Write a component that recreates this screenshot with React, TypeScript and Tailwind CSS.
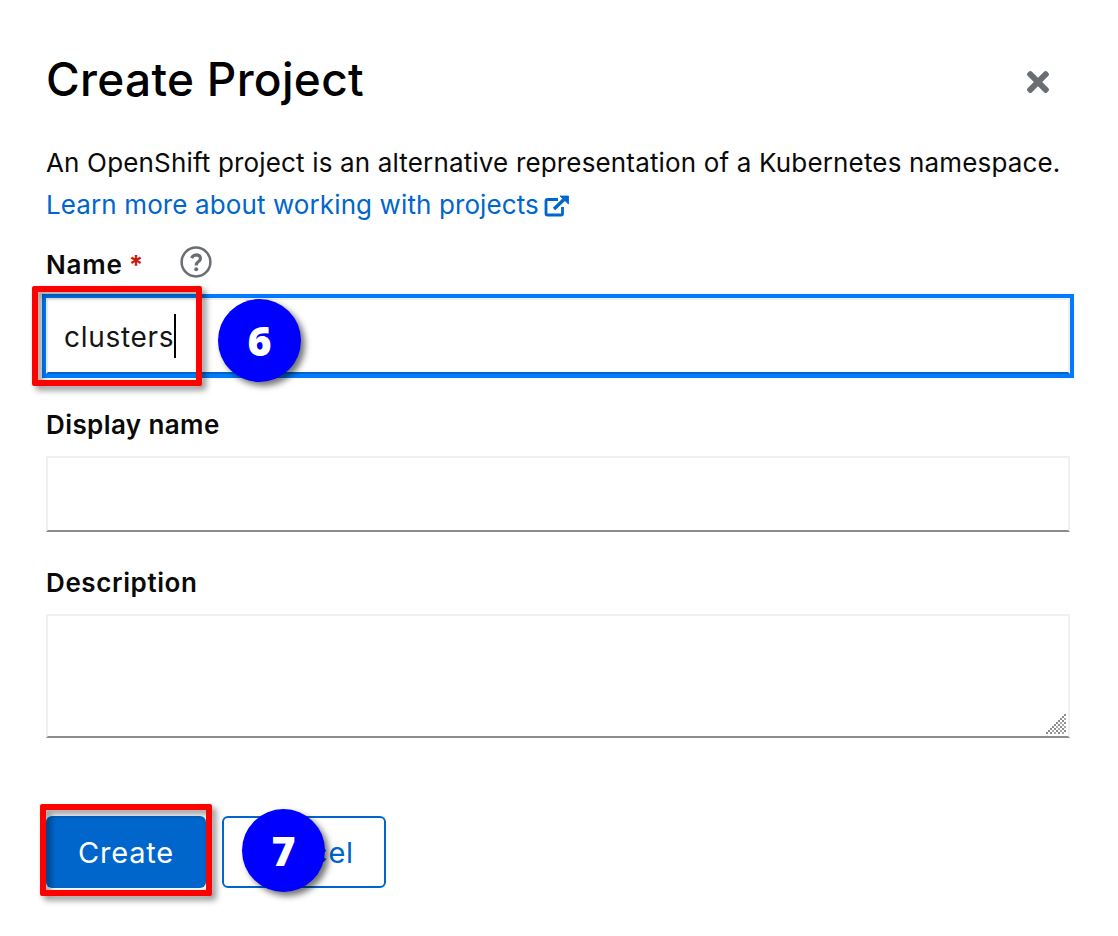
import { FaTimes } from "react-icons/fa";

function Badge({ value, className }: { value: string; className: string }) {
  return (
    <span
      className={`absolute z-20 flex size-[83px] items-center justify-center rounded-full bg-[#0000ff] font-['Open_Sans',sans-serif] text-[41px] leading-none font-extrabold tracking-normal text-white shadow-[4px_4px_6px_rgba(0,0,0,0.55)] ${className}`}
    >
      {value}
    </span>
  );
}

function Highlight({ className }: { className: string }) {
  return (
    <span
      className={`pointer-events-none absolute z-10 rounded-[2px] border-[6px] border-[#ff0000] [filter:drop-shadow(4px_4px_3px_rgba(0,0,0,0.45))] ${className}`}
    />
  );
}

function ExternalLinkIcon() {
  return (
    <svg className="mt-[2px] ml-[5px] h-[22px] w-[25px] shrink-0" viewBox="0 0 25 22" fill="none">
      <path d="M14 4.500H3.500Q2 4.500 2 6V18.500Q2 20 3.500 20H17Q18.500 20 18.500 18.500V12" stroke="#0066cc" strokeWidth="2.800" />
      <path d="M10 14L20.500 4" stroke="#0066cc" strokeWidth="3.400" />
      <path d="M16 1H24.500V9Z" fill="#0066cc" stroke="#0066cc" strokeWidth="0.800" strokeLinejoin="round" />
    </svg>
  );
}

function HelpIcon() {
  return (
    <svg className="mb-[4px] ml-[39px] size-8 text-[#6a6e73]" viewBox="0 0 32 32" fill="none" stroke="currentColor">
      <circle cx="16" cy="16" r="14.400" strokeWidth="2.500" />
      <path d="M11.600 12.200Q12.900 8.900 16.300 8.900Q20.500 9.100 20.500 12.500Q20.500 14.500 18 16Q16.200 17.200 16.200 19.400" strokeWidth="3.200" />
      <circle cx="16.200" cy="23.200" r="2" fill="currentColor" stroke="none" />
    </svg>
  );
}

function ResizeGrip() {
  const cells: { x: number; y: number; dark: boolean }[] = [];
  for (let row = 0; row < 10; row++) {
    for (let col = 9 - row; col < 10; col++) {
      const depth = col + row - 9;
      if (depth % 2 === 0) cells.push({ x: col * 2, y: row * 2, dark: depth === 0 || (row + depth / 2) % 2 === 0 });
    }
  }
  return (
    <svg className="absolute right-[2px] bottom-[2px] size-5" viewBox="0 0 20 20" shapeRendering="crispEdges">
      {cells.map((c) => (
        <rect key={`${c.x}-${c.y}`} x={c.x} y={c.y} width="2" height="2" fill={c.dark ? "#8c8c8c" : "#a8a8a8"} />
      ))}
    </svg>
  );
}

export default function App() {
  return (
    <main className="h-[936px] w-[1118px] overflow-hidden bg-white pt-[50px] pr-[48px] pl-[46px] font-['Inter',sans-serif] text-[#0a0a0a]">
      <header className="flex h-[60px] items-center justify-between pr-[21px]">
        <h1 className="-mt-[2px] text-[46px] leading-[60px] font-medium tracking-[0.3px] whitespace-nowrap text-black">Create Project</h1>
        <button aria-label="Close" className="mt-1 text-[#6a6e73]">
          <FaTimes className="h-8 w-[22px]" />
        </button>
      </header>

      <div className="mt-8 text-[26px] leading-[42px] whitespace-nowrap">
        <p className="tracking-[0.16px]">An OpenShift project is an alternative representation of a Kubernetes namespace.</p>
        <a className="flex items-center tracking-[0.11px] text-[#0066cc]">
          <span>Learn more about working with projects</span>
          <ExternalLinkIcon />
        </a>
      </div>

      <div className="mt-[17px] flex h-[42px] items-center text-[26px]">
        <label className="font-semibold tracking-[0.8px]">Name</label>
        <span className="ml-[6px] w-3 font-bold text-[#c9190b]">*</span>
        <HelpIcon />
      </div>
      <div className="relative mt-[13px] flex h-[76px] items-center border-2 border-[#f0f0f0] border-b-[#0066cc] pl-4 outline-4 outline-[#007bff]">
        <span className="mt-[2px] text-[28px] tracking-[0.7px] text-[#151515]">clusters</span>
        <span className="h-11 w-[2px] bg-black" />
        <Highlight className="top-[-14px] left-[-16px] h-[100px] w-[170px]" />
        <Badge value="6" className="top-[-1px] left-[170px]" />
      </div>

      <label className="mt-[30px] block text-[26px] leading-[42px] font-semibold tracking-[0.4px]">Display name</label>
      <div className="mt-[10px] h-[76px] border-2 border-[#f0f0f0] border-b-[#8a8d90]" />

      <label className="mt-[30px] block text-[26px] leading-[42px] font-semibold tracking-[0.6px]">Description</label>
      <div className="relative mt-[10px] h-[124px] border-2 border-[#f0f0f0] border-b-[#8a8d90]">
        <ResizeGrip />
      </div>

      <footer className="relative mt-[78px] flex gap-4 text-[29px] tracking-[0.8px]">
        <button className="h-[72px] w-40 rounded-[6px] bg-[#0066cc] pt-[2px] text-white">Create</button>
        <button className="h-[72px] w-[164px] rounded-[6px] border-2 border-[#0066cc] pt-[2px] text-[#0066cc]">Cancel</button>
        <Highlight className="top-[-12px] left-[-6px] h-[92px] w-[172px]" />
        <Badge value="7" className="top-[-7px] left-[196px]" />
      </footer>
    </main>
  );
}
